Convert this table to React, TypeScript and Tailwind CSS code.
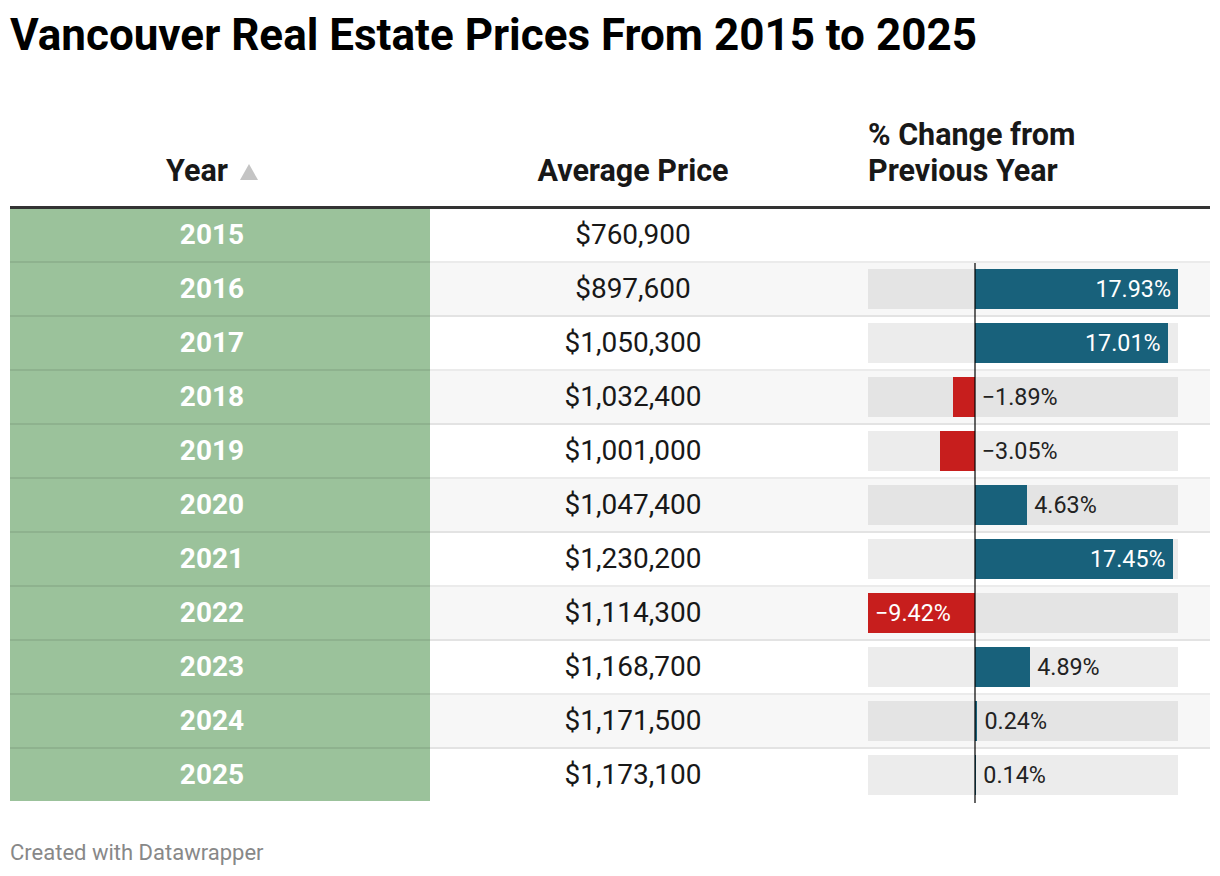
import React from "react";

type Row = { year: string; price: string; pct: number | null };

const rows: Row[] = [
  { year: "2015", price: "$760,900", pct: null },
  { year: "2016", price: "$897,600", pct: 17.93 },
  { year: "2017", price: "$1,050,300", pct: 17.01 },
  { year: "2018", price: "$1,032,400", pct: -1.89 },
  { year: "2019", price: "$1,001,000", pct: -3.05 },
  { year: "2020", price: "$1,047,400", pct: 4.63 },
  { year: "2021", price: "$1,230,200", pct: 17.45 },
  { year: "2022", price: "$1,114,300", pct: -9.42 },
  { year: "2023", price: "$1,168,700", pct: 4.89 },
  { year: "2024", price: "$1,171,500", pct: 0.24 },
  { year: "2025", price: "$1,173,100", pct: 0.14 },
];

const MIN = -9.42;
const MAX = 17.93;
const W = 310;
const scale = W / (MAX - MIN);
const ZERO = -MIN * scale;

function fmt(v: number) {
  const s = Math.abs(v).toFixed(2) + "%";
  return v < 0 ? "\u2212" + s : s;
}

function Bar({ v }: { v: number }) {
  const w = Math.abs(v) * scale;
  const inside = w > 90;
  const left = v >= 0 ? ZERO : ZERO - w;
  return (
    <div className="relative h-[40px] w-[310px] bg-black/[0.075]">
      <div
        className={v >= 0 ? "absolute top-0 h-full bg-[#18617b]" : "absolute top-0 h-full bg-[#c71e1d]"}
        style={{ left, width: w }}
      />
      {inside ? (
        v >= 0 ? (
          <span
            className="absolute top-0 flex h-full items-center pr-[7px] justify-end text-[23.3px] text-white"
            style={{ left, width: w }}
          >
            {fmt(v)}
          </span>
        ) : (
          <span
            className="absolute top-0 flex h-full items-center pl-[7px] text-[23.3px] text-white"
            style={{ left, width: w }}
          >
            {fmt(v)}
          </span>
        )
      ) : (
        <span
          className="absolute top-0 flex h-full items-center text-[23.3px] text-[#222]"
          style={{ left: (v >= 0 ? ZERO + w : ZERO) + 7 }}
        >
          {fmt(v)}
        </span>
      )}
    </div>
  );
}

export default function App() {
  return (
    <div
      className="h-[876px] w-[1220px] bg-white px-[10px] text-[#181818]"
      style={{ fontFamily: "Roboto, 'Liberation Sans', sans-serif" }}
    >
      <h1 className="pt-[9px] text-[44px] font-bold leading-[52px] text-black">
        Vancouver Real Estate Prices From 2015 to 2025
      </h1>

      <div className="mt-[56px] flex items-end border-b-[3px] border-[#333] pb-[17px] text-[30.5px] font-bold leading-[36px]">
        <div className="flex w-[420px] items-center justify-center gap-[12px] pr-[16px]">
          <span>Year</span>
          <svg width="18" height="16" viewBox="0 0 18 16" className="mt-[2px]">
            <polygon points="9,0 18,16 0,16" fill="#c4c4c4" />
          </svg>
        </div>
        <div className="w-[406px] text-center">Average Price</div>
        <div className="w-[374px] pl-[32px]">
          <div>% Change from</div>
          <div>Previous Year</div>
        </div>
      </div>

      <div>
        {rows.map((r, i) => {
          const stripe = i % 2 === 1;
          const last = i === rows.length - 1;
          const border = last ? "" : " border-b-2 border-black/[0.08]";
          return (
            <div key={r.year} className="flex h-[54px] last:h-[52px]">
              <div
                className={
                  "flex w-[420px] items-center justify-center bg-[#9bc29b] pr-[16px] text-[28px] font-bold text-white" +
                  border
                }
              >
                {r.year}
              </div>
              <div
                className={
                  (stripe ? "bg-[#f7f7f7]" : "bg-white") +
                  " flex w-[406px] items-center justify-center text-[28px] text-[#181818]" +
                  border
                }
              >
                {r.price}
              </div>
              <div
                className={
                  (stripe ? "bg-[#f7f7f7]" : "bg-white") +
                  " relative flex w-[374px] items-center pl-[32px]" +
                  border
                }
              >
                {r.pct !== null && (
                  <>
                    <Bar v={r.pct} />
                    <div
                      className="absolute top-0 bottom-[-2px] w-[2px] bg-black/60"
                      style={{ left: 32 + ZERO - 1 }}
                    />
                  </>
                )}
              </div>
            </div>
          );
        })}
      </div>

      <div className="mt-[35px] text-[22px] text-[#888]">Created with Datawrapper</div>
    </div>
  );
}
